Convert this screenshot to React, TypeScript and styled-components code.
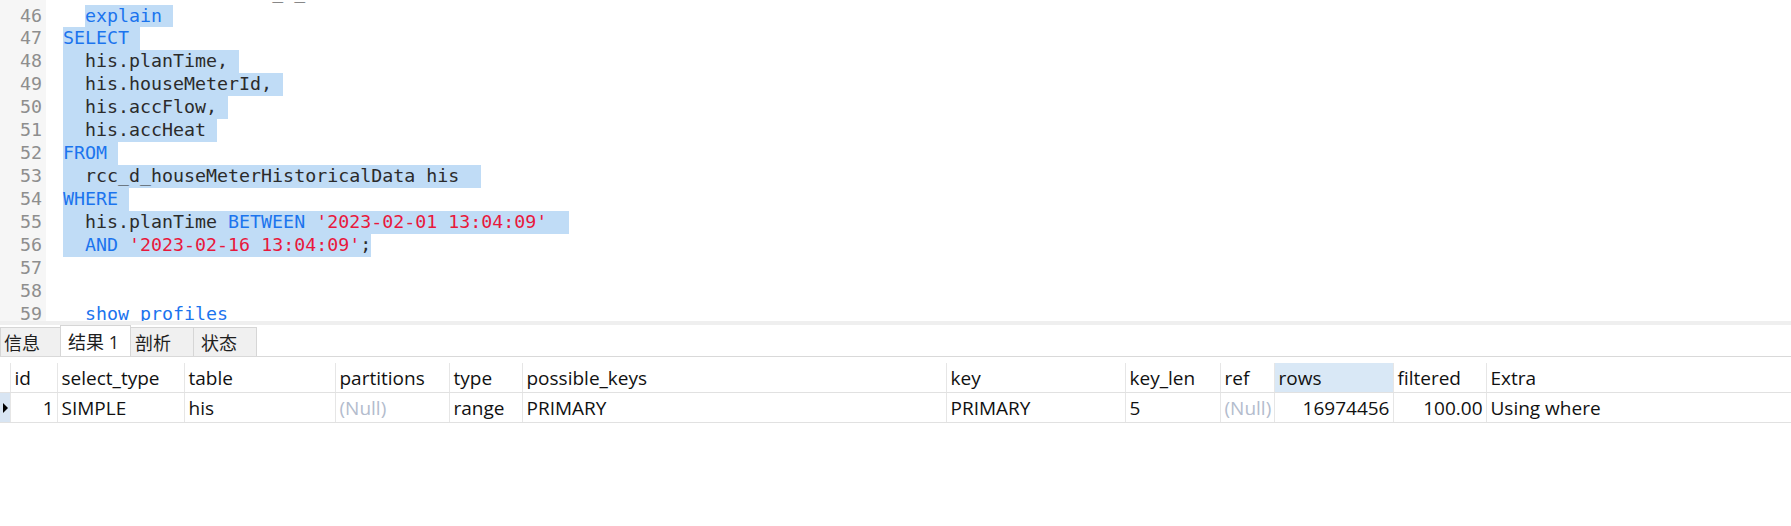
import React from "react";
import styled, { createGlobalStyle } from "styled-components";

const GlobalStyle = createGlobalStyle`
  html, body {
    margin: 0;
    padding: 0;
    background: #ffffff;
  }
`;

type Kind = "plain" | "kw" | "str";
type Token = { t: string; k?: Kind };
type CodeLineData = { n: number; lead?: Token[]; sel?: Token[] };

const LINE_H = 22.93;

const code: CodeLineData[] = [
  {
    n: 45,
    lead: [
      { t: "  " },
      { t: "SELECT", k: "kw" },
      { t: " * " },
      { t: "FROM", k: "kw" },
      { t: " rcc_d_houseMeterHistoricalData" },
    ],
  },
  { n: 46, lead: [{ t: "  " }], sel: [{ t: "explain", k: "kw" }, { t: " " }] },
  { n: 47, sel: [{ t: "SELECT", k: "kw" }, { t: " " }] },
  { n: 48, sel: [{ t: "  his.planTime, " }] },
  { n: 49, sel: [{ t: "  his.houseMeterId, " }] },
  { n: 50, sel: [{ t: "  his.accFlow, " }] },
  { n: 51, sel: [{ t: "  his.accHeat " }] },
  { n: 52, sel: [{ t: "FROM", k: "kw" }, { t: " " }] },
  { n: 53, sel: [{ t: "  rcc_d_houseMeterHistoricalData his  " }] },
  { n: 54, sel: [{ t: "WHERE", k: "kw" }, { t: " " }] },
  {
    n: 55,
    sel: [
      { t: "  his.planTime " },
      { t: "BETWEEN", k: "kw" },
      { t: " " },
      { t: "'2023-02-01 13:04:09'", k: "str" },
      { t: "  " },
    ],
  },
  {
    n: 56,
    sel: [
      { t: "  " },
      { t: "AND", k: "kw" },
      { t: " " },
      { t: "'2023-02-16 13:04:09'", k: "str" },
      { t: ";" },
    ],
  },
  { n: 57 },
  { n: 58 },
  { n: 59, lead: [{ t: "  " }, { t: "show profiles", k: "kw" }] },
];

const colors: Record<Kind, string> = {
  plain: "#2b2b2b",
  kw: "#1b74ee",
  str: "#e8183c",
};

const Page = styled.div`
  width: 100%;
  height: 526px;
  display: flex;
  flex-direction: column;
  background: #ffffff;
  overflow: hidden;
`;

const Editor = styled.div`
  height: 321px;
  flex-shrink: 0;
  overflow: hidden;
  font-family: "DejaVu Sans Mono", "Liberation Mono", monospace;
  font-size: 18.3px;
  line-height: ${LINE_H}px;
`;

/* content scrolled so that line 45 sits mostly above the top edge */
const Scroller = styled.div`
  display: flex;
  margin-top: -18.4px;
  min-height: calc(100% + 18.4px);
`;

const Gutter = styled.div`
  width: 46px;
  flex-shrink: 0;
  box-sizing: border-box;
  padding-right: 4px;
  background: #f6f6f6;
  color: #8e8e8e;
  text-align: right;
`;

const LineNo = styled.div`
  height: ${LINE_H}px;
`;

const CodeArea = styled.div`
  flex: 1;
  padding-left: 17px;
`;

const CodeLine = styled.div`
  height: ${LINE_H}px;
  white-space: pre;
`;

const Sel = styled.span`
  display: inline-block;
  height: ${LINE_H}px;
  vertical-align: top;
  background: #c0dcf6;
`;

const Tok = styled.span<{ $kind: Kind }>`
  color: ${(p) => colors[p.$kind]};
`;

const Splitter = styled.div`
  height: 4px;
  flex-shrink: 0;
  background: #efefef;
`;

const TabBar = styled.div`
  height: 32px;
  flex-shrink: 0;
  box-sizing: border-box;
  display: flex;
  align-items: flex-end;
  border-bottom: 1px solid #d9d9d9;
  font-family: "Open Sans", "Noto Sans CJK SC", sans-serif;
  font-size: 18px;
  color: #1e1e1e;
`;

const Tab = styled.div<{ $active?: boolean; $w: number; $pl: number }>`
  width: ${(p) => p.$w}px;
  height: ${(p) => (p.$active ? 31 : 29)}px;
  box-sizing: border-box;
  padding-left: ${(p) => p.$pl}px;
  margin-right: -1px;
  display: flex;
  align-items: center;
  border: 1px solid #d6d6d6;
  border-bottom: none;
  background: ${(p) => (p.$active ? "#ffffff" : "#f0f0f0")};
  white-space: nowrap;
`;

const Grid = styled.div`
  margin-top: 6px;
  font-family: "Open Sans", "Noto Sans", sans-serif;
  font-size: 19px;
  color: #111111;
`;

const columns = [11, 47, 127, 151, 114, 73, 424, 179, 95, 54, 119, 93];

const Row = styled.div`
  display: grid;
  grid-template-columns: ${columns.map((c) => c + "px").join(" ")} 1fr;
  height: 30px;
  box-sizing: border-box;
  border-bottom: 1px solid #e1e1e1;
`;

const Cell = styled.div<{ $right?: boolean; $muted?: boolean; $hl?: boolean }>`
  display: flex;
  align-items: center;
  justify-content: ${(p) => (p.$right ? "flex-end" : "flex-start")};
  padding: 0 3.5px;
  min-width: 0;
  overflow: hidden;
  white-space: nowrap;
  border-right: 1px solid #e6e6e6;
  background: ${(p) => (p.$hl ? "#d9e8f6" : "transparent")};
  color: ${(p) => (p.$muted ? "#b3bccd" : "inherit")};

  &:last-child {
    border-right: none;
  }
`;

const Indicator = styled.div<{ $current?: boolean }>`
  display: flex;
  align-items: center;
  padding-left: 3px;
  border-right: 1px solid #e6e6e6;
  background: ${(p) => (p.$current ? "#d8e5f3" : "transparent")};
`;

const Arrow = styled.span`
  width: 0;
  height: 0;
  border-top: 5px solid transparent;
  border-bottom: 5px solid transparent;
  border-left: 5px solid #000000;
`;

type Col = { name: string; right?: boolean };

const headers: Col[] = [
  { name: "id", right: true },
  { name: "select_type" },
  { name: "table" },
  { name: "partitions" },
  { name: "type" },
  { name: "possible_keys" },
  { name: "key" },
  { name: "key_len" },
  { name: "ref" },
  { name: "rows", right: true },
  { name: "filtered", right: true },
  { name: "Extra" },
];

const rows: (string | null)[][] = [
  ["1", "SIMPLE", "his", null, "range", "PRIMARY", "PRIMARY", "5", null, "16974456", "100.00", "Using where"],
];

const tabs = [
  { label: "信息", w: 61, pl: 3 },
  { label: "结果 1", w: 71, pl: 7, active: true },
  { label: "剖析", w: 64, pl: 4 },
  { label: "状态", w: 64, pl: 7 },
];

function renderTokens(tokens: Token[]) {
  return tokens.map((tk, i) => (
    <Tok key={i} $kind={tk.k ?? "plain"}>
      {tk.t}
    </Tok>
  ));
}

export default function App() {
  return (
    <Page>
      <GlobalStyle />
      <Editor>
        <Scroller>
          <Gutter>
            {code.map((l) => (
              <LineNo key={l.n}>{l.n}</LineNo>
            ))}
          </Gutter>
          <CodeArea>
            {code.map((l) => (
              <CodeLine key={l.n}>
                {l.lead && renderTokens(l.lead)}
                {l.sel && <Sel>{renderTokens(l.sel)}</Sel>}
              </CodeLine>
            ))}
          </CodeArea>
        </Scroller>
      </Editor>
      <Splitter />
      <TabBar>
        {tabs.map((t) => (
          <Tab key={t.label} $w={t.w} $pl={t.pl} $active={t.active}>
            {t.label}
          </Tab>
        ))}
      </TabBar>
      <Grid>
        <Row>
          <Indicator />
          {headers.map((h) => (
            <Cell key={h.name} $hl={h.name === "rows"}>
              {h.name}
            </Cell>
          ))}
        </Row>
        {rows.map((r, ri) => (
          <Row key={ri}>
            <Indicator $current>
              <Arrow />
            </Indicator>
            {r.map((v, ci) => (
              <Cell key={ci} $right={headers[ci].right} $muted={v === null}>
                {v === null ? "(Null)" : v}
              </Cell>
            ))}
          </Row>
        ))}
      </Grid>
    </Page>
  );
}
